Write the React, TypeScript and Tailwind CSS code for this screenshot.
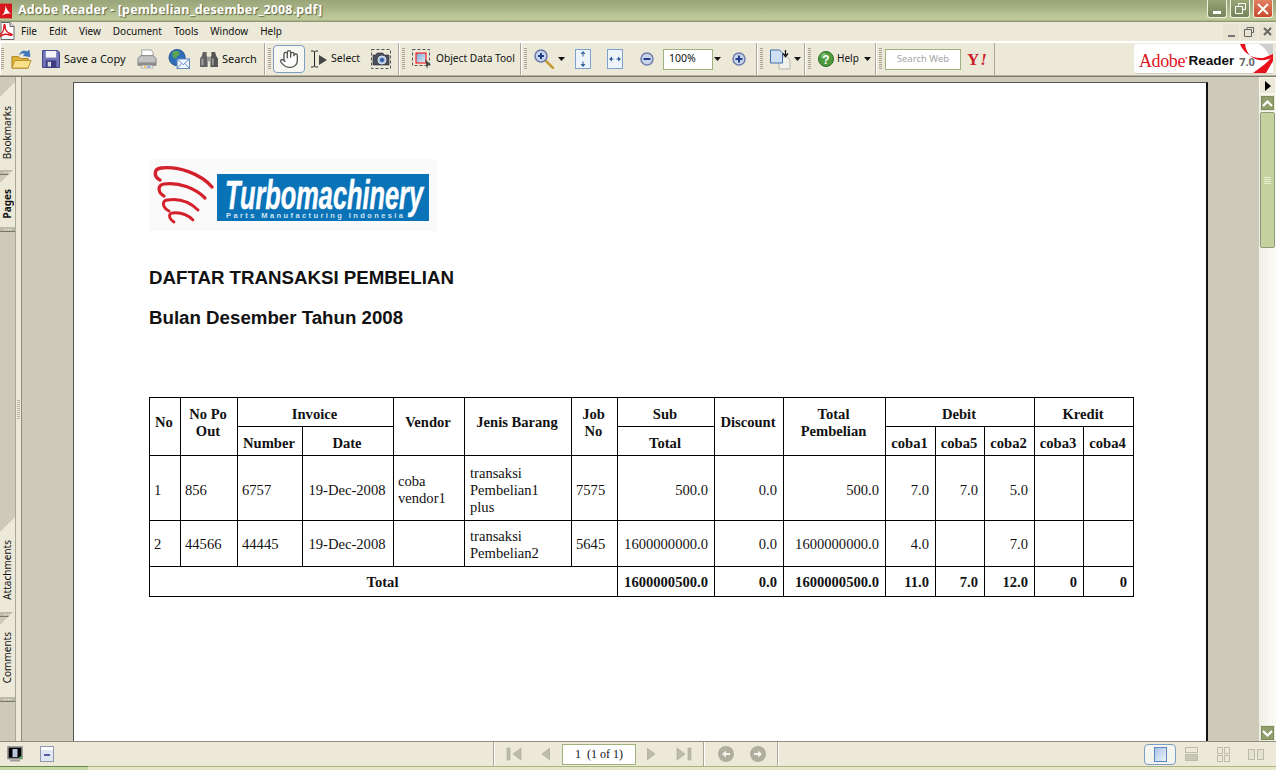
import React from "react";
import { Hand } from "lucide-react";

const Grip = ({ className = "" }: { className?: string }) => (
  <div className={`w-[3px] h-[22px] ${className} bg-[repeating-linear-gradient(to_bottom,#a8a594_0px,#a8a594_1px,transparent_1px,transparent_2px)]`} />
);

const Caret = ({ className = "" }: { className?: string }) => (
  <svg width="7" height="4" viewBox="0 0 7 4" className={className}><polygon points="0,0 7,0 3.5,4" fill="#111" /></svg>
);

const PdfDoc = () => (
  <svg width="16" height="18" viewBox="0 0 16 18">
    <path d="M2 .5h9l4 4v13H2z" fill="#fff" stroke="#666" />
    <path d="M11 .5v4h4" fill="#ddd" stroke="#666" />
    <path d="M0 13c3-1 5-5 5-9 0-2 1-2 1 0 0 4 3 7 6 8 2 .5 1 2-1 1-3-1-7-1-9 1-1 1-3 0-2-1z" fill="none" stroke="#d8141c" strokeWidth="1.4" />
  </svg>
);

const Folder = () => (
  <svg width="21" height="21" viewBox="0 0 22 22">
    <path d="M1 8h7l2 2h8v10H1z" fill="#e2b53a" stroke="#a87f1c" />
    <path d="M1 20l3-8h17l-3 8z" fill="#fbe08a" stroke="#b98f2c" />
    <path d="M9 6C10 2 14 1 17 3l2-2 1 7-7-1 2-2c-2-1-4-1-6 1z" fill="#3d78c4" stroke="#2a5b9a" strokeWidth=".5" />
  </svg>
);

const Floppy = () => (
  <svg width="18" height="18" viewBox="0 0 19 19">
    <path d="M.5.5h16l2 2v16H.5z" fill="#7475b8" stroke="#3d3d85" />
    <rect x="4" y="1" width="11" height="7" fill="#f4f4fa" />
    <rect x="4" y="11" width="11" height="7.5" fill="#3c3c80" />
    <rect x="6" y="12.5" width="3.5" height="5" fill="#dcdcec" />
  </svg>
);

const Printer = () => (
  <svg width="20" height="20" viewBox="0 0 21 21">
    <path d="M5 1h10l2 3v6H5z" fill="#fff" stroke="#9a9a9a" />
    <path d="M1 10l3-3h13l3 3v7H1z" fill="#c3c3c3" stroke="#7d7d7d" />
    <rect x="1.5" y="14" width="18" height="3.5" fill="#8d8d8d" />
    <path d="M5 17h11l1 3H4z" fill="#f5f5f5" stroke="#909090" strokeWidth=".6" />
    <rect x="7" y="18" width="3" height="1.4" fill="#e8b83a" />
    <rect x="11" y="18" width="3" height="1.4" fill="#5b8fd0" />
  </svg>
);

const GlobeMail = () => (
  <svg width="22" height="20" viewBox="0 0 23 21">
    <circle cx="9.5" cy="9" r="8.5" fill="#2f6fb8" stroke="#1e4f8e" />
    <path d="M5 3c3-2 6-1 7 1s-2 3-3 5-3 1-4-1 0-3 0-5zM13 11c2 0 3 1 2 3l-2 1c-1-1-1-3 0-4z" fill="#5ea552" />
    <rect x="9.5" y="10.5" width="13" height="10" fill="#f4f7fd" stroke="#5b86c0" />
    <path d="M9.5 10.5l6.5 6 6.500-6M9.5 20.500l4.500-5M22.500 20.500l-4.500-5" fill="none" stroke="#5b86c0" />
  </svg>
);

const Binoculars = () => (
  <svg width="18" height="17" viewBox="0 0 19 18">
    <path d="M3 1h4v4l1 2v10H0V8l2-3z" fill="#616161" />
    <path d="M12 1h4l1 4 2 3v9h-8V7l1-2z" fill="#565656" />
    <rect x="7.500" y="6" width="4" height="5" fill="#9d9d9d" />
    <rect x="1.500" y="8" width="2" height="7" fill="#a5a5a5" />
    <rect x="12.500" y="8" width="2" height="7" fill="#9a9a9a" />
  </svg>
);

const Camera = () => (
  <svg width="20" height="20" viewBox="0 0 20 20">
    <rect x=".5" y=".5" width="19" height="19" fill="none" stroke="#555" strokeDasharray="3 2" />
    <path d="M2 6h3l1-2h6l1 2h5v10H2z" fill="#4a4f5c" stroke="#2b2d33" strokeWidth=".6" />
    <circle cx="11" cy="11" r="4" fill="#a7c0e4" stroke="#dfe4ee" />
    <circle cx="11" cy="11" r="2" fill="#2d5a9c" />
  </svg>
);

const ObjectTool = () => (
  <svg width="20" height="20" viewBox="0 0 20 20">
    <rect x=".5" y=".5" width="17" height="16" fill="none" stroke="#555" strokeDasharray="3 2" />
    <defs>
      <linearGradient id="og" x1="0" y1="0" x2="1" y2="1"><stop offset="0" stopColor="#7aa7d6" /><stop offset="1" stopColor="#e6eef8" /></linearGradient>
    </defs>
    <rect x="4" y="4" width="10" height="10" fill="url(#og)" stroke="#f00" strokeWidth="1" />
    <path d="M13 10l6 6-3 .5-1 3.500z" fill="#444" />
  </svg>
);

const ZoomGlass = () => (
  <svg width="21" height="20" viewBox="0 0 21 20">
    <path d="M11 11l8 8" stroke="#c79a3a" strokeWidth="2.500" strokeLinecap="round" />
    <circle cx="7" cy="7" r="6" fill="#c8d4ee" stroke="#6d76a8" strokeWidth="1.500" />
    <path d="M4 7h6M7 4v6" stroke="#1e3f8a" strokeWidth="2" />
  </svg>
);

const FitV = () => (
  <svg width="16" height="20" viewBox="0 0 16 20">
    <rect x=".5" y=".5" width="15" height="19" fill="#eef4fb" stroke="#7da2cf" />
    <path d="M8 2l-2.500 3h5zM8 18l-2.500-3h5zM7.500 4.500h1v3h-1zM7.500 12.500h1v3h-1z" fill="#2f5f95" />
  </svg>
);

const FitH = () => (
  <svg width="16" height="20" viewBox="0 0 16 20">
    <rect x=".5" y=".5" width="15" height="19" fill="#eef4fb" stroke="#7da2cf" />
    <path d="M2 10l3-2.500v5zM14 10l-3-2.500v5z" fill="#2f5f95" />
    <path d="M4.500 9.500h2v1h-2zM9.500 9.500h2v1h-2z" fill="#2f5f95" />
  </svg>
);

const RoundBtn = ({ plus }: { plus?: boolean }) => (
  <svg width="14" height="14" viewBox="0 0 14 14">
    <circle cx="7" cy="7" r="6" fill="#c9d4ea" stroke="#6f7ea8" strokeWidth="1.500" />
    <path d={plus ? "M3.500 7h7M7 3.500v7" : "M3.500 7h7"} stroke="#1f3f8a" strokeWidth="2" />
  </svg>
);

const PagesIcon = () => (
  <svg width="21" height="21" viewBox="0 0 21 21">
    <path d="M9 8h8l3 3v9H9z" fill="#f1f1ec" stroke="#b5b5ad" />
    <path d="M.5 1h9l3 3v10H.5z" fill="#cfe0f4" stroke="#3f6ea8" />
    <path d="M15.500 1v5M13 4.500l2.500 3 2.500-3" fill="none" stroke="#111" strokeWidth="1.300" />
  </svg>
);

const HelpIcon = () => (
  <svg width="16" height="16" viewBox="0 0 16 16">
    <circle cx="8" cy="8" r="7.500" fill="#4c9a3c" stroke="#2d6e28" />
    <circle cx="6" cy="5" r="3" fill="#94cf84" opacity=".6" />
    <text x="8" y="12.500" textAnchor="middle" fontSize="12" fontWeight="700" fill="#fff" fontFamily="Liberation Sans, sans-serif">?</text>
  </svg>
);

const TB = "flex items-center h-full border-r border-r-[#aca899] border-l border-l-white shrink-0";
const txt = "leading-none text-[#111] whitespace-nowrap -mt-[2px]";

const Toolbar = () => (
  <div className="h-[32px] bg-[#ece9d8] flex items-stretch">
    <div className={`${TB} w-[265px]`}>
      <Grip />
      <div className="ml-[7px]"><Folder /></div>
      <div className="ml-[10px]"><Floppy /></div>
      <span className={`${txt} text-[11px] ml-[4px] w-[63px]`}>Save a Copy</span>
      <div className="ml-[10px]"><Printer /></div>
      <div className="ml-[11px]"><GlobeMail /></div>
      <div className="ml-[10px]"><Binoculars /></div>
      <span className={`${txt} text-[11px] ml-[4px]`}>Search</span>
    </div>
    <div className={`${TB} w-[134px] pl-[2px]`}>
      <Grip />
      <div className="ml-[2px] w-[32px] h-[28px] rounded-[4px] bg-[#f7f7f4] border border-[#7c9fc6] flex items-center justify-center">
        <Hand size={20} fill="#fff" stroke="#555" strokeWidth={1.6} />
      </div>
      <svg className="ml-[5px]" width="18" height="18" viewBox="0 0 18 18">
        <path d="M1 1h2.500l1 1 1-1H8M1 17h2.500l1-1 1 1H8M4.500 2v14" fill="none" stroke="#222" strokeWidth="1" />
        <path d="M9 5l8 5-8 5z" fill="#444" />
      </svg>
      <span className={`${txt} text-[10.5px] ml-[3px] w-[30px]`}>Select</span>
      <div className="ml-[10px]"><Camera /></div>
    </div>
    <div className={`${TB} w-[122px] pl-[2px]`}>
      <Grip />
      <div className="ml-[7px]"><ObjectTool /></div>
      <span className={`${txt} text-[10.2px] ml-[4px]`}>Object Data Tool</span>
    </div>
    <div className={`${TB} w-[236px] pl-[2px]`}>
      <Grip />
      <div className="ml-[7px]"><ZoomGlass /></div>
      <Caret className="ml-[3px]" />
      <div className="ml-[10px]"><FitV /></div>
      <div className="ml-[16px]"><FitH /></div>
      <div className="ml-[17px]"><RoundBtn /></div>
      <div className="ml-[9px] w-[50px] h-[21px] bg-white border border-[#9fb17f] flex items-center pl-[5px] pb-[1px] text-[10.5px] text-[#111]">100%</div>
      <Caret className="ml-[1px]" />
      <div className="ml-[11px]"><RoundBtn plus /></div>
    </div>
    <div className={`${TB} w-[48px] pl-[2px]`}>
      <Grip />
      <div className="ml-[7px]"><PagesIcon /></div>
      <Caret className="ml-[3px]" />
    </div>
    <div className={`${TB} w-[71px] pl-[2px]`}>
      <Grip />
      <div className="ml-[7px]"><HelpIcon /></div>
      <span className={`${txt} text-[10px] ml-[3px] w-[21px]`}>Help</span>
      <Caret className="ml-[6px]" />
    </div>
    <div className={`${TB} w-[119px] pl-[2px]`}>
      <Grip />
      <div className="ml-[3px] w-[76px] h-[21px] bg-white border border-[#9fb17f] flex items-center justify-center text-[9.5px] text-[#a5a5a5]">Search Web</div>
      <span className="ml-[6px] text-[17px] leading-none font-bold text-[#c8202c] tracking-[1px] [font-family:'Liberation_Serif',serif]">Y<span className="italic">!</span></span>
    </div>
    <div className="flex-1 flex justify-end items-center pr-[3px]">
      <div className="relative w-[139px] h-[30px] bg-white rounded-l-[3px] overflow-hidden flex items-center pl-[5px] pt-[5px] border-b border-[#cfccbc]">
        <span className="text-[18px] leading-none text-[#e1141c] [font-family:'Liberation_Serif',serif] tracking-[-0.4px]">Adobe</span>
        <span className="text-[4px] leading-none text-[#e1141c] self-start mt-[7px]">●</span>
        <span className="ml-[1px] text-[13.5px] leading-none font-bold text-[#111] [font-family:'Liberation_Sans',sans-serif]">Reader</span>
        <span className="ml-[5px] text-[11px] leading-none font-bold text-[#666]">7.0</span>
        <svg className="absolute right-0 top-0" width="36" height="30" viewBox="0 0 36 30">
          <path d="M22 0C30 5 34 12 33 20L36 17V0z" fill="#cfcfcf" />
          <path d="M3 0C6 8 14 15 26 14L36 10 36 13C25 20 10 16 8 0z" fill="#e8101c" />
          <path d="M36 12L28 20 16 29H29L36 17z" fill="#e8101c" />
        </svg>
      </div>
    </div>
  </div>
);

const VTab = ({ label, h, pad, bold, className = "" }: { label: string; h: string; pad: string; bold?: boolean; className?: string }) => (
  <div className={`relative w-[15px] ${h} ${className} shrink-0`}>
    <div className={`absolute inset-0 bg-[#ece9d8] [clip-path:polygon(100%_0,100%_100%,0_100%,0_15px)] flex items-end justify-center pr-[1px] ${pad}`}>
      <span className={`[writing-mode:vertical-rl] rotate-180 text-[10px] leading-none text-[#111] ${bold ? "font-bold" : ""}`}>{label}</span>
    </div>
    <div className="absolute left-0 right-0 bottom-0 h-[5px] bg-[#bdbaa9] border-b border-b-[#77766a] flex items-center justify-center gap-[1px]">
      {[0, 1, 2, 3].map((i) => <div key={i} className="w-[1px] h-[1px] bg-[#eee]" />)}
    </div>
  </div>
);

const Logo = () => (
  <div className="w-[288px] h-[72px] bg-[#fafafa]">
    <svg width="288" height="72" viewBox="0 0 288 72">
      <g fill="none" stroke="#d4202a" strokeLinecap="round">
        <path d="M63 28C52 15 30 7 12 9 4 10 5 18 11 21" strokeWidth="3.400" />
        <path d="M56 39C46 29 30 23 15 25 8 26 9 34 15 37" strokeWidth="3.200" />
        <path d="M49 51C41 43 30 39 18 41 12 42 14 49 20 52" strokeWidth="3" />
        <path d="M44 61C38 55 31 53 23 54 19 55 20 60 25 63" strokeWidth="2.800" />
      </g>
      <rect x="68" y="15" width="212" height="47" fill="#0a73b8" />
      <text x="76" y="50" fill="#fff" stroke="#fff" strokeWidth=".5" fontFamily="Liberation Sans, sans-serif" fontWeight="700" fontStyle="italic" fontSize="41" textLength="198" lengthAdjust="spacingAndGlyphs">Turbomachinery</text>
      <text x="77" y="59" fill="#cfe4f4" fontFamily="Liberation Sans, sans-serif" fontWeight="700" fontSize="7.500" textLength="177" lengthAdjust="spacing">Parts Manufacturing Indonesia</text>
    </svg>
  </div>
);

const base = "border border-black pl-[4px] pr-[6px] leading-[17px]";
const th = `${base} font-bold text-center pt-[4px] pb-0`;
const rs = `${base} font-bold text-center pt-0 pb-[8px]`;
const d1 = `${base} pt-[4px] pb-0`;
const d2 = `${base} pt-[2px] pb-0`;
const r1 = `${d1} text-right`;
const r2 = `${d2} text-right`;
const c1 = `${d1} text-center`;
const c2 = `${d2} text-center`;
const j1 = `border border-black pl-[5px] pr-[5px] leading-[17px] pt-[4px] pb-0`;
const j2 = `border border-black pl-[5px] pr-[5px] leading-[17px] pt-[2px] pb-0`;
const tt = `${base} font-bold text-center pt-[2px] pb-0`;
const b = `${d2} text-right font-bold`;

const DataTable = () => (
  <table className="border-collapse table-fixed w-[984px] text-[14.6px] text-[#111] [font-family:'Liberation_Serif',serif]">
    <colgroup>
      {[31, 57, 65, 91, 71, 107, 46, 97, 69, 102, 50, 49, 50, 49, 50].map((w, i) => (
        <col key={i} style={{ width: w }} />
      ))}
    </colgroup>
    <tbody>
      <tr className="h-[29px]">
        <td rowSpan={2} className={rs}>No</td>
        <td rowSpan={2} className={rs}>No Po<br />Out</td>
        <td colSpan={2} className={th}>Invoice</td>
        <td rowSpan={2} className={rs}>Vendor</td>
        <td rowSpan={2} className={rs}>Jenis Barang</td>
        <td rowSpan={2} className={rs}>Job<br />No</td>
        <td className={th}>Sub</td>
        <td rowSpan={2} className={rs}>Discount</td>
        <td rowSpan={2} className={rs}>Total<br />Pembelian</td>
        <td colSpan={3} className={th}>Debit</td>
        <td colSpan={2} className={th}>Kredit</td>
      </tr>
      <tr className="h-[29px]">
        <td className={th}>Number</td>
        <td className={th}>Date</td>
        <td className={th}>Total</td>
        <td className={th}>coba1</td>
        <td className={th}>coba5</td>
        <td className={th}>coba2</td>
        <td className={th}>coba3</td>
        <td className={th}>coba4</td>
      </tr>
      <tr className="h-[65px]">
        <td className={d1}>1</td>
        <td className={d1}>856</td>
        <td className={d1}>6757</td>
        <td className={c1}>19-Dec-2008</td>
        <td className={d1}>coba<br />vendor1</td>
        <td className={j1}>transaksi<br />Pembelian1<br />plus</td>
        <td className={d1}>7575</td>
        <td className={r1}>500.0</td>
        <td className={r1}>0.0</td>
        <td className={r1}>500.0</td>
        <td className={r1}>7.0</td>
        <td className={r1}>7.0</td>
        <td className={r1}>5.0</td>
        <td className={r1}></td>
        <td className={r1}></td>
      </tr>
      <tr className="h-[46px]">
        <td className={d2}>2</td>
        <td className={d2}>44566</td>
        <td className={d2}>44445</td>
        <td className={c2}>19-Dec-2008</td>
        <td className={d2}></td>
        <td className={j2}>transaksi<br />Pembelian2</td>
        <td className={d2}>5645</td>
        <td className={r2}>1600000000.0</td>
        <td className={r2}>0.0</td>
        <td className={r2}>1600000000.0</td>
        <td className={r2}>4.0</td>
        <td className={r2}></td>
        <td className={r2}>7.0</td>
        <td className={r2}></td>
        <td className={r2}></td>
      </tr>
      <tr className="h-[30px]">
        <td colSpan={7} className={tt}>Total</td>
        <td className={b}>1600000500.0</td>
        <td className={b}>0.0</td>
        <td className={b}>1600000500.0</td>
        <td className={b}>11.0</td>
        <td className={b}>7.0</td>
        <td className={b}>12.0</td>
        <td className={b}>0</td>
        <td className={b}>0</td>
      </tr>
    </tbody>
  </table>
);

const Chevron = ({ up }: { up?: boolean }) => (
  <svg width="11" height="7" viewBox="0 0 11 7">
    <path d={up ? "M1 6l4.500-4.500L10 6" : "M1 1l4.500 4.500L10 1"} fill="none" stroke="#fff" strokeWidth="2.200" />
  </svg>
);

const ScrollBtn = ({ up }: { up?: boolean }) => (
  <div className="mx-auto w-[15px] h-[16px] bg-[#8f9e6c] border border-[#e9ecd9] outline outline-1 outline-[#7c8a5c] -outline-offset-2 rounded-[1px] flex items-center justify-center">
    <Chevron up={up} />
  </div>
);

const Scrollbar = () => (
  <div className="w-[17px] h-full flex flex-col bg-[linear-gradient(to_right,#f0eee6,#fbfbf8)]">
    <div className="h-[17px] bg-[#ece9d8] border border-[#f8f7f1] flex items-center justify-center">
      <svg width="6" height="10" viewBox="0 0 6 10"><polygon points="0,0 6,5 0,10" fill="#000" /></svg>
    </div>
    <div className="mt-[1px]"><ScrollBtn up /></div>
    <div className="mt-[1px] mx-auto w-[15px] h-[136px] bg-[#c5d19e] border border-[#8f9a78] rounded-[2px] flex flex-col items-center justify-center gap-[1px]">
      {[0, 1, 2, 3].map((i) => <div key={i} className="w-[7px] h-[1px] bg-[#e8eed2]" />)}
    </div>
    <div className="flex-1" />
    <ScrollBtn />
  </div>
);

const Nav = ({ d, w = 16 }: { d: string; w?: number }) => (
  <svg width={w} height="16" viewBox={`0 0 ${w} 16`}><path d={d} fill="#bdbbaa" stroke="#a9a797" strokeWidth=".6" /></svg>
);

const NavCircle = ({ left }: { left?: boolean }) => (
  <svg width="16" height="16" viewBox="0 0 16 16">
    <circle cx="8" cy="8" r="8" fill="#b0ae9f" />
    <path d={left ? "M4 8l4-3.500V7h4v2H8v2.500z" : "M12 8L8 4.500V7H4v2h4v2.500z"} fill="#f4f3ec" />
  </svg>
);

const LayoutBtn = ({ children, className }: { children: React.ReactNode; className: string }) => (
  <div className={className}>{children}</div>
);

const StatusBar = () => (
  <div className="h-[25px] bg-[#ece9d8] border-t border-t-[#8d8b7b] flex items-center">
    <svg className="ml-[7px]" width="16" height="16" viewBox="0 0 16 16">
      <rect x="1" y="1" width="14" height="11.500" fill="#000" stroke="#8a8a8a" strokeWidth="1.600" />
      <rect x="5.500" y="3" width="5" height="8" fill="#b9c5dc" />
      <rect x="3" y="13.500" width="10" height="2" fill="#9b9b9b" />
      <rect x="12.500" y="10.500" width="2" height="2" fill="#3fd04a" />
    </svg>
    <svg className="ml-[17px]" width="14" height="16" viewBox="0 0 14 16">
      <rect x=".5" y=".5" width="13" height="15" fill="#dfe6f2" stroke="#8f98ac" />
      <rect x="1" y="1" width="12" height="3" fill="#fff" />
      <rect x="4" y="8" width="6" height="2" fill="#4f5fa4" />
    </svg>
    <div className="ml-[439px] h-full border-l border-l-[#aca899] border-r border-r-white w-[2px]" />
    <div className="ml-[11px]"><Nav d="M1 2h3v12H1zM15 2v12L7 8z" /></div>
    <div className="ml-[18px]"><Nav w={10} d="M10 2v12L2 8z" /></div>
    <div className="ml-[12px] w-[74px] h-[21px] bg-white border border-[#9fb17f] text-[12px] text-[#111] flex items-center justify-center [font-family:'Liberation_Serif',serif]">1&nbsp;&nbsp;(1 of 1)</div>
    <div className="ml-[11px]"><Nav w={10} d="M0 2v12l8-6z" /></div>
    <div className="ml-[19px]"><Nav d="M1 2v12l8-6zM12 2h3v12h-3z" /></div>
    <div className="ml-[11px] h-full border-l border-l-[#aca899] border-r border-r-white w-[2px]" />
    <div className="ml-[13px]"><NavCircle left /></div>
    <div className="ml-[16px]"><NavCircle /></div>
    <div className="ml-[11px] h-full border-l border-l-[#aca899] border-r border-r-white w-[2px]" />
    <LayoutBtn className="ml-[365px] w-[32px] h-[21px] bg-[#f5f5f0] border border-[#7c9fc6] rounded-[4px] flex items-center justify-center">
      <div className="w-[13px] h-[15px] bg-[linear-gradient(135deg,#a9c4e8,#eef4fb)] border border-[#5b86c0]" />
    </LayoutBtn>
    <LayoutBtn className="ml-[9px] w-[13px] flex flex-col gap-[1px]">
      <div className="h-[6px] border border-[#bdbbaa]" />
      <div className="h-[7px] bg-[#c9c7b6] border border-[#bdbbaa]" />
    </LayoutBtn>
    <LayoutBtn className="ml-[19px] w-[13px] grid grid-cols-2 gap-[1px]">
      <div className="h-[7px] border border-[#bdbbaa]" />
      <div className="h-[7px] border border-[#bdbbaa]" />
      <div className="h-[7px] border border-[#bdbbaa]" />
      <div className="h-[7px] border border-[#bdbbaa]" />
    </LayoutBtn>
    <LayoutBtn className="ml-[18px] flex gap-[2px]">
      <div className="w-[7px] h-[11px] border border-[#bdbbaa] bg-[#e3e1d2]" />
      <div className="w-[7px] h-[11px] border border-[#bdbbaa] bg-[#e3e1d2]" />
    </LayoutBtn>
  </div>
);

export default function App() {
  return (
    <div className="w-[1280px] h-[770px] bg-white overflow-hidden">
      <div className="w-[1276px] h-full flex flex-col [font-family:'Noto_Sans',sans-serif]">
        {/* title bar */}
        <div className="h-[22px] shrink-0 bg-[linear-gradient(to_bottom,#9aa67a_0%,#a5b183_35%,#bcc898_75%,#bdc999_90%,#7f8a64_100%)] flex items-center">
          <svg width="12" height="16" viewBox="0 0 13 16">
            <rect width="13" height="16" fill="#d8141c" />
            <path d="M2 13C5 10 6 6 6 2c1 4 3 7 6 9-3-1-7 0-10 2z" fill="#fff" />
          </svg>
          <span className="ml-[6px] text-[12.5px] leading-none font-bold text-white tracking-[0.15px] -mt-[1px] [text-shadow:1px_1px_1px_#5d6648]">Adobe Reader - [pembelian_desember_2008.pdf]</span>
          <div className="ml-auto mr-[3px] flex gap-[3px] self-start">
            <div className="w-[20px] h-[18px] rounded-b-[3px] border border-t-0 border-[#eef0e0] bg-[linear-gradient(to_bottom,#98a675,#73825a)] flex items-end justify-center pb-[3px]">
              <div className="w-[8px] h-[3px] bg-white" />
            </div>
            <div className="w-[20px] h-[18px] rounded-b-[3px] border border-t-0 border-[#eef0e0] bg-[linear-gradient(to_bottom,#98a675,#73825a)] flex items-center justify-center">
              <svg width="11" height="11" viewBox="0 0 11 11"><path d="M3.500 2.500V.5h7v6H8M.5 3.500h7v7h-7z" fill="none" stroke="#fff" /></svg>
            </div>
            <div className="w-[20px] h-[18px] rounded-b-[3px] border border-t-0 border-[#eef0e0] bg-[linear-gradient(to_bottom,#e08060,#c64a2c)] flex items-center justify-center">
              <svg width="12" height="12" viewBox="0 0 12 12"><path d="M1 1l10 10M11 1L1 11" stroke="#fff" strokeWidth="2" /></svg>
            </div>
          </div>
        </div>
        {/* menu bar */}
        <div className="h-[19px] shrink-0 bg-[#ece9d8] flex items-center text-[10px] text-[#111]">
          <div className="-mt-[1px] -ml-[1px]"><PdfDoc /></div>
          <div className="ml-[6px] -mt-[1px] flex gap-[12px] leading-none">
            <span>File</span><span>Edit</span><span>View</span><span>Document</span><span>Tools</span><span>Window</span><span>Help</span>
          </div>
          <div className="ml-auto flex items-center gap-[2px] mr-[1px]">
            <div className="w-[16px] h-[16px] bg-[#e6e3d3] flex items-end justify-center pb-[3px]"><div className="w-[7px] h-[2px] bg-[#777]" /></div>
            <div className="w-[16px] h-[16px] bg-[#e6e3d3] flex items-center justify-center">
              <svg width="10" height="10" viewBox="0 0 10 10"><path d="M3 2V.5h6.500v5H8M.5 2.500h7v7h-7z" fill="none" stroke="#666" /></svg>
            </div>
            <div className="w-[16px] h-[16px] bg-[#e6e3d3] flex items-center justify-center">
              <svg width="9" height="9" viewBox="0 0 9 9"><path d="M1 1l7 7M8 1L1 8" stroke="#666" strokeWidth="2" /></svg>
            </div>
          </div>
        </div>
        <div className="h-[2px] shrink-0 bg-white" />
        <Toolbar />
        <div className="h-[2px] shrink-0 bg-[#b5b2a1] border-b border-b-[#7e7c6e]" />
        {/* main */}
        <div className="flex-1 min-h-0 flex bg-[#cdcaba]">
          <div className="w-[15px] shrink-0 flex flex-col">
            <VTab label="Bookmarks" h="h-[93px]" pad="pb-[16px]" className="mt-[5px]" />
            <VTab label="Pages" h="h-[64px]" pad="pb-[13px]" bold className="-mt-[7px]" />
            <VTab label="Attachments" h="h-[100px]" pad="pb-[17px]" className="mt-[285px]" />
            <VTab label="Comments" h="h-[92px]" pad="pb-[19px]" className="-mt-[7px]" />
          </div>
          <div className="w-[7px] shrink-0 bg-[#ece9d8] border-l border-l-[#a9a797] border-r border-r-[#8d8b7b] flex flex-col items-center justify-center gap-[1px]">
            {[0, 1, 2, 3, 4, 5, 6, 7, 8, 9].map((i) => <div key={i} className="w-[3px] h-[1px] bg-[#b5b2a1]" />)}
          </div>
          <div className="flex-1 min-w-0 overflow-hidden pl-[51px] pt-[5px]">
            <div className="w-[1135px] h-[700px] bg-white border-l border-t border-l-[#555] border-t-[#555] border-r-2 border-r-[#111] pl-[75px] pt-[76px]">
              <Logo />
              <h1 className="mt-[35px] text-[18.7px] leading-[24px] font-bold text-[#111] [font-family:'Liberation_Sans',sans-serif]">DAFTAR TRANSAKSI PEMBELIAN</h1>
              <h2 className="mt-[16px] text-[18.7px] leading-[24px] font-bold text-[#111] [font-family:'Liberation_Sans',sans-serif]">Bulan Desember Tahun 2008</h2>
              <div className="mt-[67px]"><DataTable /></div>
            </div>
          </div>
          <Scrollbar />
        </div>
        <StatusBar />
        {/* bottom strip */}
        <div className="h-[4px] shrink-0 flex bg-[#e9e7c9] border-t border-t-[#a9b67f]">
          <div className="w-[88px] bg-[#c6d8a4] border-t border-t-[#5f8a4c] -mt-[1px]" />
        </div>
      </div>
    </div>
  );
}
